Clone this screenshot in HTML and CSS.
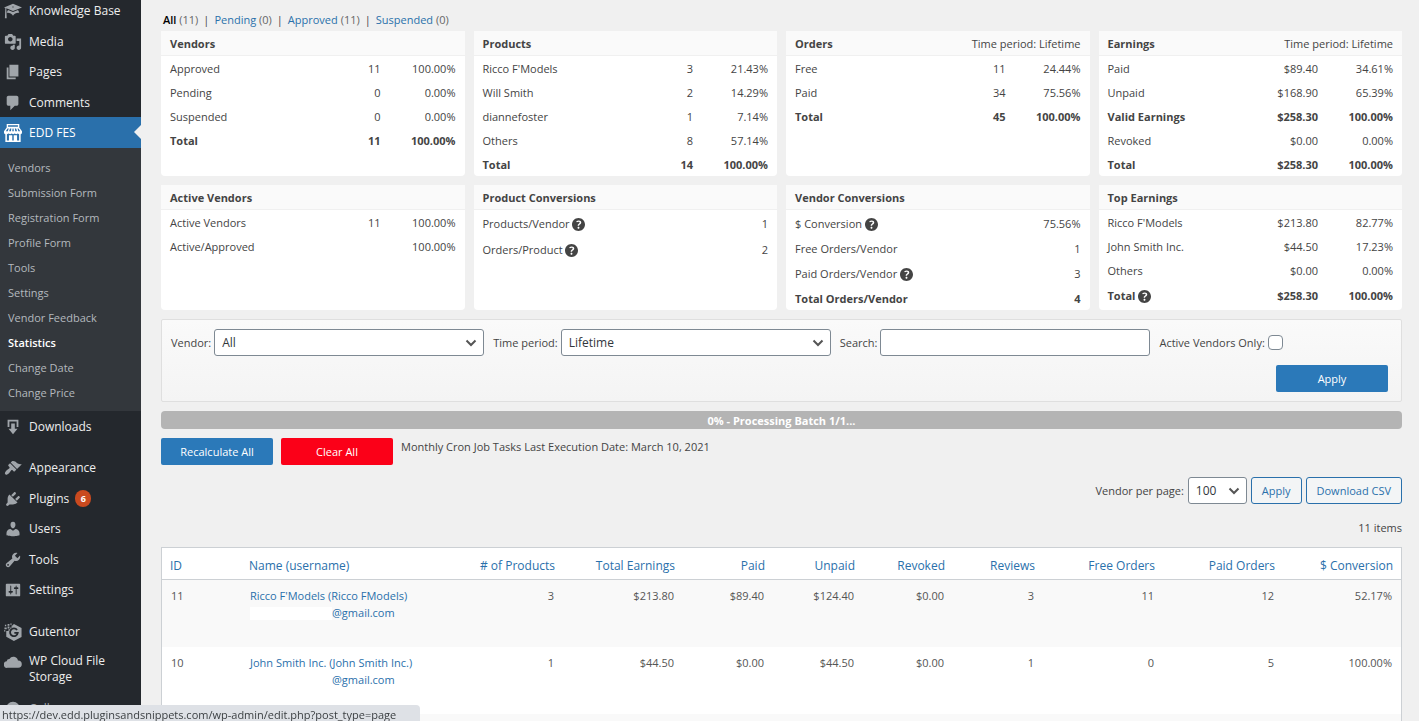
FILE: index.html
```html
<!DOCTYPE html>
<html lang="en">
<head>
  <meta charset="utf-8">
  <title>Statistics</title>
  <link rel="stylesheet" href="styles.css">
</head>
<body>
  <svg class="defs" aria-hidden="true">
    <symbol id="help" viewBox="3 3 14 14">
      <path d="M17 10c0-3.87-3.14-7-7-7-3.87 0-7 3.13-7 7s3.13 7 7 7c3.86 0 7-3.13 7-7zm-6.3 1.48H9.14v-.43c0-.38.08-.7.24-.98s.46-.57.88-.89c.41-.29.68-.53.81-.71.14-.18.2-.39.2-.62 0-.25-.09-.44-.28-.58-.19-.13-.45-.19-.79-.19-.58 0-1.25.19-2 .57l-.64-1.28c.87-.49 1.8-.74 2.77-.74.81 0 1.45.2 1.92.58.48.39.71.91.71 1.55 0 .43-.09.8-.29 1.11-.19.32-.57.67-1.11 1.06-.38.28-.61.49-.71.63-.1.15-.15.34-.15.57v.35zm-1.47 2.74c-.18-.17-.27-.42-.27-.73 0-.33.08-.58.26-.75s.43-.25.77-.25c.32 0 .57.09.75.26s.27.42.27.74c0 .3-.09.55-.27.72-.18.18-.43.27-.75.27-.33 0-.58-.09-.76-.26z"/>
    </symbol>
  </svg>

  <div class="wrap">
    <!-- admin menu -->
    <nav class="sidebar">
      <ul class="menu">
        <li><a href="#"><svg viewBox="0 0 20 20"><path d="M10 10L2.54 7.02 3 18H1l.48-11.41L0 6l10-4 10 4zm0-5c-.55 0-1 .22-1 .5s.45.5 1 .5 1-.22 1-.5-.45-.5-1-.5zm0 6l5.57-2.23c.71.94 1.2 2.07 1.36 3.3-.3-.04-.61-.07-.93-.07-2.55 0-4.78 1.37-6 3.41C8.78 13.37 6.55 12 4 12c-.32 0-.63.03-.93.07.16-1.23.65-2.36 1.36-3.3z"/></svg>Knowledge Base</a></li>
        <li><a href="#"><svg viewBox="0 0 20 20"><path d="M13 11V4c0-.55-.45-1-1-1h-1.67L9 1H5L3.67 3H2c-.55 0-1 .45-1 1v7c0 .55.45 1 1 1h10c.55 0 1-.45 1-1zM7 4.5c1.38 0 2.5 1.12 2.5 2.5S8.38 9.5 7 9.5 4.5 8.38 4.5 7 5.62 4.5 7 4.5zM14 6h5v10.5c0 1.38-1.12 2.5-2.5 2.5S14 17.88 14 16.5s1.12-2.5 2.5-2.5c.17 0 .34.02.5.05V9h-3V6zm-4 8.05V13h2v3.5c0 1.38-1.12 2.5-2.5 2.5S7 17.88 7 16.5 8.12 14 9.5 14c.17 0 .34.02.5.05z"/></svg>Media</a></li>
        <li><a href="#"><svg viewBox="0 0 20 20"><path d="M6 15V2h10v13H6zm-1 1h8v2H3V5h2v11z"/></svg>Pages</a></li>
        <li><a href="#"><svg viewBox="0 0 20 20"><path d="M5 2h9c1.1 0 2 .9 2 2v7c0 1.1-.9 2-2 2h-2l-5 5v-5H5c-1.1 0-2-.9-2-2V4c0-1.1.9-2 2-2z"/></svg>Comments</a></li>
        <li class="current">
          <a href="#"><svg viewBox="0 0 20 20"><path fill-rule="evenodd" d="M3 0h14v4l3 4v1.500c0 1-.6 1.700-1.500 2V20h-17v-8.500C.6 11.200 0 10.500 0 9.500V8l3-4zm1.500 1.500V3h11V1.500zM4 5L2 8h2.200L5.300 5zm2.600 0L5.700 8h2l.5-3zm2.900 0L9.200 8h1.700l-.3-3zm2.500 0l.5 3h2L13.500 5zm3 0l1 3h2l-2-3zM3.200 11.500v6.800h2.300v-5.800h3.700v5.800h1.600v-5.800h3.700v5.800h2.300v-6.800l-1.500-1-1.700 1-1.700-1-1.700 1-1.700-1-1.700 1-1.700-1z"/></svg>EDD FES</a>
          <ul class="submenu">
            <li><a href="#">Vendors</a></li>
            <li><a href="#">Submission Form</a></li>
            <li><a href="#">Registration Form</a></li>
            <li><a href="#">Profile Form</a></li>
            <li><a href="#">Tools</a></li>
            <li><a href="#">Settings</a></li>
            <li><a href="#">Vendor Feedback</a></li>
            <li><a href="#" class="active">Statistics</a></li>
            <li><a href="#">Change Date</a></li>
            <li><a href="#">Change Price</a></li>
          </ul>
        </li>
        <li><a href="#"><svg viewBox="0 0 20 20"><path d="M14.010 4v6h2V2H4v8h2.010V4h8zm-2 2v6h3l-5 6-5-6h3V6h4z"/></svg>Downloads</a></li>
        <li class="space"><a href="#"><svg viewBox="0 0 20 20"><path d="M14.480 11.060L7.410 3.990l1.500-1.500c.5-.56 2.300-.47 3.510.32 1.210.8 1.430 1.280 2.910 2.100 1.180.64 2.450 1.260 4.450.85zm-.71.71L6.700 4.700 4.930 6.470c-.39.39-.39 1.020 0 1.410l1.060 1.060c.39.39.39 1.030 0 1.420-.6.6-1.430 1.110-2.210 1.690-.35.26-.7.53-1.010.84C1.430 14.230.4 16.080 1.400 17.070c.99 1 2.840-.03 4.180-1.360.31-.31.58-.66.85-1.020.57-.78 1.080-1.610 1.690-2.210.39-.39 1.020-.39 1.410 0l1.060 1.060c.39.39 1.020.39 1.410 0z"/></svg>Appearance</a></li>
        <li><a href="#"><svg viewBox="0 0 20 20"><path d="M13.110 4.360L9.870 7.600 8 5.730l3.240-3.240c.35-.34 1.050-.2 1.560.32.52.51.66 1.210.31 1.550zm-8 1.770l.91-1.120 9.010 9.010-1.190.84c-.71.71-2.630 1.160-3.820 1.160H6.140L4.900 17.260c-.59.59-1.540.59-2.120 0-.59-.58-.59-1.530 0-2.120l1.240-1.240v-3.880c0-1.130.4-3.190 1.090-3.890zm7.260 3.970l3.240-3.240c.34-.35 1.040-.21 1.550.31.52.51.66 1.210.31 1.550l-3.240 3.250z"/></svg>Plugins <span class="count">6</span></a></li>
        <li><a href="#"><svg viewBox="0 0 20 20"><path d="M10 9.250c-2.270 0-2.730-3.440-2.730-3.440C7 4.020 7.820 2 9.970 2c2.160 0 2.980 2.020 2.710 3.810 0 0-.41 3.440-2.680 3.440zm0 2.570L12.720 10c2.390 0 4.520 2.330 4.520 4.530v2.490s-3.650 1.130-7.240 1.130c-3.650 0-7.240-1.130-7.240-1.130v-2.490c0-2.250 1.940-4.480 4.470-4.480z"/></svg>Users</a></li>
        <li><a href="#"><svg viewBox="0 0 20 20"><path d="M16.680 9.770c-1.340 1.340-3.300 1.670-4.950.99l-5.410 6.520c-.99.99-2.590.99-3.580 0s-.99-2.590 0-3.570l6.520-5.420c-.68-1.650-.35-3.610.99-4.950 1.280-1.280 3.120-1.620 4.720-1.060l-2.890 2.890 2.820 2.820 2.860-2.870c.53 1.580.18 3.390-1.080 4.650zM3.810 16.210c.4.39 1.040.39 1.430 0 .4-.4.4-1.040 0-1.430-.39-.4-1.030-.4-1.430 0-.39.39-.39 1.030 0 1.430z"/></svg>Tools</a></li>
        <li><a href="#"><svg viewBox="0 0 20 20"><path d="M18 16V4c0-.55-.45-1-1-1H3c-.55 0-1 .45-1 1v12c0 .55.45 1 1 1h14c.55 0 1-.45 1-1zM8 11h1c.55 0 1 .45 1 1s-.45 1-1 1H8v1.500c0 .28-.22.5-.5.5s-.5-.22-.5-.5V13H6c-.55 0-1-.45-1-1s.45-1 1-1h1V5.500c0-.28.22-.5.5-.5s.5.22.5.5V11zm5-2h-1c-.55 0-1-.45-1-1s.45-1 1-1h1V5.500c0-.28.22-.5.5-.5s.5.22.5.5V7h1c.55 0 1 .45 1 1s-.45 1-1 1h-1v5.500c0 .28-.22.5-.5.5s-.5-.22-.5-.5V9z"/></svg>Settings</a></li>
        <li class="space"><a href="#"><svg viewBox="0 0 20 20"><path d="M11 1l8.500 4.500v10L11 20l-8.500-4.800V9H5V7h2V5h2V3zM1 2h1.500v1.500H1zM4 1h2v2H4zM7 .5h1.500V2H7zM.5 5H3v2H.5zM4 4h2v2H4zM8 3h1v1H8zM0 8h1.500v1.500H0z"/><path class="mark" d="M14.500 7.800A4.300 4.300 0 1 0 15.300 11H11.500"/></svg>Gutentor</a></li>
        <li class="tall"><a href="#"><svg viewBox="0 0 20 20"><path d="M15.500 8.300A5.200 5.200 0 0 0 6 6.600a3 3 0 0 0-3 2.700A3.600 3.600 0 0 0 3.800 16.500h12a4.100 4.100 0 0 0-.3-8.200z"/></svg>WP Cloud File Storage</a></li>
        <li class="collapse"><button type="button"><svg viewBox="0 0 20 20"><path fill-rule="evenodd" d="M10 2a8 8 0 1 0 0 16 8 8 0 0 0 0-16zm2 4v8l-5-4z"/></svg>Collapse menu</button></li>
      </ul>
    </nav>

    <main class="content">
      <ul class="views">
        <li><a href="#" class="on">All <span>(11)</span></a></li>
        <li><a href="#">Pending <span>(0)</span></a></li>
        <li><a href="#">Approved <span>(11)</span></a></li>
        <li><a href="#">Suspended <span>(0)</span></a></li>
      </ul>

      <!-- stat boxes -->
      <div class="cards">
        <section class="card">
          <h3>Vendors</h3>
          <table>
            <tr><td>Approved</td><td>11</td><td>100.00%</td></tr>
            <tr><td>Pending</td><td>0</td><td>0.00%</td></tr>
            <tr><td>Suspended</td><td>0</td><td>0.00%</td></tr>
            <tr class="total"><td>Total</td><td>11</td><td>100.00%</td></tr>
          </table>
        </section>
        <section class="card">
          <h3>Products</h3>
          <table>
            <tr><td>Ricco F'Models</td><td>3</td><td>21.43%</td></tr>
            <tr><td>Will Smith</td><td>2</td><td>14.29%</td></tr>
            <tr><td>diannefoster</td><td>1</td><td>7.14%</td></tr>
            <tr><td>Others</td><td>8</td><td>57.14%</td></tr>
            <tr class="total"><td>Total</td><td>14</td><td>100.00%</td></tr>
          </table>
        </section>
        <section class="card">
          <h3>Orders <span>Time period: Lifetime</span></h3>
          <table>
            <tr><td>Free</td><td>11</td><td>24.44%</td></tr>
            <tr><td>Paid</td><td>34</td><td>75.56%</td></tr>
            <tr class="total"><td>Total</td><td>45</td><td>100.00%</td></tr>
          </table>
        </section>
        <section class="card">
          <h3>Earnings <span>Time period: Lifetime</span></h3>
          <table>
            <tr><td>Paid</td><td>$89.40</td><td>34.61%</td></tr>
            <tr><td>Unpaid</td><td>$168.90</td><td>65.39%</td></tr>
            <tr class="total"><td>Valid Earnings</td><td>$258.30</td><td>100.00%</td></tr>
            <tr><td>Revoked</td><td>$0.00</td><td>0.00%</td></tr>
            <tr class="total"><td>Total</td><td>$258.30</td><td>100.00%</td></tr>
          </table>
        </section>
        <section class="card">
          <h3>Active Vendors</h3>
          <table>
            <tr><td>Active Vendors</td><td>11</td><td>100.00%</td></tr>
            <tr><td>Active/Approved</td><td></td><td>100.00%</td></tr>
          </table>
        </section>
        <section class="card">
          <h3>Product Conversions</h3>
          <table>
            <tr class="tip"><td>Products/Vendor <svg class="help"><use href="#help"/></svg></td><td></td><td>1</td></tr>
            <tr class="tip"><td>Orders/Product <svg class="help"><use href="#help"/></svg></td><td></td><td>2</td></tr>
          </table>
        </section>
        <section class="card">
          <h3>Vendor Conversions</h3>
          <table>
            <tr class="tip"><td>$ Conversion <svg class="help"><use href="#help"/></svg></td><td></td><td>75.56%</td></tr>
            <tr><td>Free Orders/Vendor</td><td></td><td>1</td></tr>
            <tr class="tip"><td>Paid Orders/Vendor <svg class="help"><use href="#help"/></svg></td><td></td><td>3</td></tr>
            <tr class="total"><td>Total Orders/Vendor</td><td></td><td>4</td></tr>
          </table>
        </section>
        <section class="card">
          <h3>Top Earnings</h3>
          <table>
            <tr><td>Ricco F'Models</td><td>$213.80</td><td>82.77%</td></tr>
            <tr><td>John Smith Inc.</td><td>$44.50</td><td>17.23%</td></tr>
            <tr><td>Others</td><td>$0.00</td><td>0.00%</td></tr>
            <tr class="total tip"><td>Total <svg class="help"><use href="#help"/></svg></td><td>$258.30</td><td>100.00%</td></tr>
          </table>
        </section>
      </div>

      <!-- filter -->
      <form class="filter">
        <div class="fields">
          <div class="field"><label for="vendor">Vendor:</label><select id="vendor"><option>All</option></select></div>
          <div class="field"><label for="period">Time period:</label><select id="period"><option>Lifetime</option></select></div>
          <div class="field"><label for="search">Search:</label><input type="text" id="search"></div>
          <div class="field"><label for="active">Active Vendors Only:</label><input type="checkbox" id="active"></div>
        </div>
        <button type="button" class="btn">Apply</button>
      </form>

      <div class="progress">0% - Processing Batch 1/1...</div>

      <div class="actions">
        <button type="button" class="btn">Recalculate All</button>
        <button type="button" class="btn red">Clear All</button>
        <p>Monthly Cron Job Tasks Last Execution Date: March 10, 2021</p>
      </div>

      <div class="pager">
        <label for="perpage">Vendor per page:</label>
        <select id="perpage"><option>100</option></select>
        <button type="button" class="btn line">Apply</button>
        <button type="button" class="btn line">Download CSV</button>
      </div>
      <p class="items">11 items</p>

      <table class="list">
        <colgroup>
          <col class="c-id"><col><col class="wide"><col class="wide"><col class="slim"><col class="slim"><col class="slim"><col class="slim"><col class="wide"><col class="wide"><col class="c-conv">
        </colgroup>
        <thead>
          <tr>
            <th><a href="#">ID</a></th>
            <th><a href="#">Name (username)</a></th>
            <th><a href="#"># of Products</a></th>
            <th><a href="#">Total Earnings</a></th>
            <th><a href="#">Paid</a></th>
            <th><a href="#">Unpaid</a></th>
            <th><a href="#">Revoked</a></th>
            <th><a href="#">Reviews</a></th>
            <th><a href="#">Free Orders</a></th>
            <th><a href="#">Paid Orders</a></th>
            <th><a href="#">$ Conversion</a></th>
          </tr>
        </thead>
        <tbody>
          <tr>
            <td>11</td>
            <td><a href="#">Ricco F'Models (Ricco FModels)</a><br><span class="hidden"></span><a href="#">@gmail.com</a></td>
            <td>3</td><td>$213.80</td><td>$89.40</td><td>$124.40</td><td>$0.00</td><td>3</td><td>11</td><td>12</td><td>52.17%</td>
          </tr>
          <tr>
            <td>10</td>
            <td><a href="#">John Smith Inc. (John Smith Inc.)</a><br><span class="hidden"></span><a href="#">@gmail.com</a></td>
            <td>1</td><td>$44.50</td><td>$0.00</td><td>$44.50</td><td>$0.00</td><td>1</td><td>0</td><td>5</td><td>100.00%</td>
          </tr>
          <tr><td colspan="11"></td></tr>
        </tbody>
      </table>
    </main>
  </div>

  <!-- link target shown by the browser -->
  <div class="status">https://dev.edd.pluginsandsnippets.com/wp-admin/edit.php?post_type=page</div>
</body>
</html>
```

FILE: styles.css
```css
* {
  box-sizing: border-box;
}
body {
  margin: 0;
  background: #f0f0f0;
  color: #444;
  font-family: "Open Sans", "Noto Sans", sans-serif;
  font-size: 11px;
  line-height: 17px;
}
ul, p, h3 {
  margin: 0;
  padding: 0;
  list-style: none;
}
a {
  color: #2a70ab;
  text-decoration: none;
}
button, select, input {
  font-family: inherit;
  margin: 0;
}
.defs {
  display: none;
}
.wrap {
  display: flex;
  height: 100vh;
  overflow: hidden;
}

/* sidebar */
.sidebar {
  flex: none;
  width: 141px;
  background: #24282d;
}
.menu {
  margin-top: -5px;
}
.menu > li > a,
.collapse button {
  display: flex;
  align-items: center;
  gap: 7px;
  height: 31px;
  padding: 1px 0 0 4px;
  color: #eee;
  font-size: 12px;
  line-height: 16px;
}
.menu > li:nth-child(even) > a {
  height: 30px;
}
.menu svg {
  flex: none;
  width: 18px;
  height: 18px;
  fill: #a0a5aa;
}
.menu .mark {
  fill: none;
  stroke: #24282d;
  stroke-width: 2;
}
.menu > .space {
  margin-top: 11px;
}
.menu > .tall > a {
  height: 45px;
  padding-right: 20px;
}
.tall svg {
  align-self: flex-start;
  margin-top: 6px;
}
.menu > .collapse button {
  width: 100%;
  height: 34px;
  border: 0;
  background: none;
  color: #a0a5aa;
}
.menu > .current > a {
  position: relative;
  background: #2a70ab;
  color: #fff;
}
.current > a svg {
  fill: #fff;
}
.current > a::after {
  content: "";
  position: absolute;
  right: 0;
  top: 8px;
  border: 7px solid transparent;
  border-left-width: 0;
  border-right-color: #f0f0f0;
}
.count {
  width: 16px;
  height: 17px;
  margin-left: -1px;
  border-radius: 9px;
  background: #ca4a1f;
  color: #fff;
  font-size: 9px;
  font-weight: 700;
  line-height: 17px;
  text-align: center;
}
.submenu {
  padding: 7px 0 6px;
  background: #33373c;
}
.submenu a {
  display: block;
  padding-left: 8px;
  color: #b4b9be;
  line-height: 25px;
}
.submenu .active {
  color: #fff;
  font-weight: 600;
}

/* content */
.content {
  flex: 1;
  min-width: 0;
  padding: 11px 17px 0 20px;
}
.views {
  display: flex;
  height: 20px;
  padding-left: 2px;
}
.views li + li::before {
  content: "|";
  margin: 0 5px;
}
.views span {
  color: #666;
}
.views .on {
  color: #000;
  font-weight: 600;
}
.views .on span {
  font-weight: 400;
}

/* stat boxes */
.cards {
  display: grid;
  grid-template-columns: repeat(4, 1fr);
  gap: 9px;
}
.card {
  border-radius: 0 3px 4px 4px;
  background: #fff;
}
.card h3 {
  display: flex;
  justify-content: space-between;
  height: 25px;
  padding: 0 9px;
  border-bottom: 1px solid #f0f0f0;
  background: #fafafa;
  font-size: 11px;
  font-weight: 700;
  line-height: 25px;
}
.card h3 span {
  font-weight: 400;
}
.card table {
  width: 100%;
  border-collapse: collapse;
  table-layout: fixed;
}
.card td {
  height: 24px;
  padding: 0;
  text-align: right;
  white-space: nowrap;
}
.card td:first-child {
  padding-left: 9px;
  text-align: left;
}
.card td:nth-child(2) {
  width: 80px;
}
.card td:last-child {
  width: 84px;
  padding-right: 9px;
}
.card .tip td {
  height: 26px;
}
.card .total {
  font-weight: 700;
}
.help {
  width: 13px;
  height: 13px;
  fill: #444;
  vertical-align: -3px;
}

/* filter */
.filter {
  display: flex;
  flex-direction: column;
  gap: 9px;
  margin-top: 9px;
  padding: 9px 13px 9px 9px;
  border: 1px solid #dfdfdf;
  border-radius: 2px;
  background: linear-gradient(#fafafa, #f4f4f4);
}
.fields {
  display: flex;
  gap: 9px;
}
.field {
  display: flex;
  align-items: center;
  gap: 3px;
}
select, input[type="text"] {
  width: 270px;
  height: 27px;
  padding: 0 7px;
  border: 1px solid #7e8993;
  border-radius: 3px;
  background: #fff;
  color: #32373c;
  font-size: 12px;
}
select {
  appearance: none;
  background: #fff url("data:image/svg+xml,%3Csvg xmlns='http://www.w3.org/2000/svg' viewBox='0 0 12 8'%3E%3Cpath d='M1.500 1.500L6 6l4.500-4.500' fill='none' stroke='%23555' stroke-width='2'/%3E%3C/svg%3E") no-repeat right 6px center / 12px 8px;
}
input[type="checkbox"] {
  appearance: none;
  width: 15px;
  height: 15px;
  border: 1px solid #7e8993;
  border-radius: 4px;
  background: #fff;
}
.btn {
  width: 112px;
  height: 27px;
  padding: 0;
  border: 0;
  border-radius: 2px;
  background: #2b79b9;
  color: #fff;
  font-size: 11px;
}
.filter .btn {
  align-self: flex-end;
}
.red {
  background: #fb0018;
}
.line {
  width: auto;
  padding: 0 10px;
  border: 1px solid #2a70ab;
  border-radius: 3px;
  background: #f3f5f6;
  color: #2a70ab;
}
.progress {
  height: 18px;
  margin: 9px 0;
  border-radius: 4px;
  background: #b4b4b4;
  color: #fff;
  font-weight: 700;
  line-height: 19px;
  text-align: center;
}
.actions {
  display: flex;
  gap: 8px;
}

/* table top */
.pager {
  display: flex;
  align-items: center;
  justify-content: flex-end;
  gap: 4px;
  margin-top: 12px;
}
.pager select {
  width: 59px;
}
.items {
  margin: 15px 0 11px;
  text-align: right;
}

.list {
  width: 100%;
  border: 1px solid #ccd0d4;
  border-spacing: 0;
  background: #fff;
  table-layout: fixed;
}
.c-id {
  width: 79px;
}
.c-conv {
  width: 118px;
}
.wide {
  width: 120px;
}
.slim {
  width: 90px;
}
.list th {
  height: 32px;
  padding: 3px 8px 0;
  border-bottom: 1px solid #ccd0d4;
  font-size: 12px;
  font-weight: 400;
  text-align: right;
  white-space: nowrap;
}
.list td {
  height: 67px;
  padding: 7px 9px;
  color: #555;
  text-align: right;
  vertical-align: top;
  white-space: nowrap;
}
.list th:nth-child(-n+2),
.list td:nth-child(-n+2) {
  text-align: left;
}
.list tbody tr:nth-child(odd) {
  background: #f9f9f9;
}
.hidden {
  display: inline-block;
  width: 82px;
  height: 13px;
  background: #fff;
  vertical-align: -3px;
}

.status {
  position: fixed;
  left: 0;
  bottom: 0;
  min-width: 420px;
  height: 16px;
  padding: 0 7px 0 2px;
  border-top-right-radius: 4px;
  background: #dee1e6;
  color: #3c4043;
  line-height: 20px;
  white-space: nowrap;
}
```
